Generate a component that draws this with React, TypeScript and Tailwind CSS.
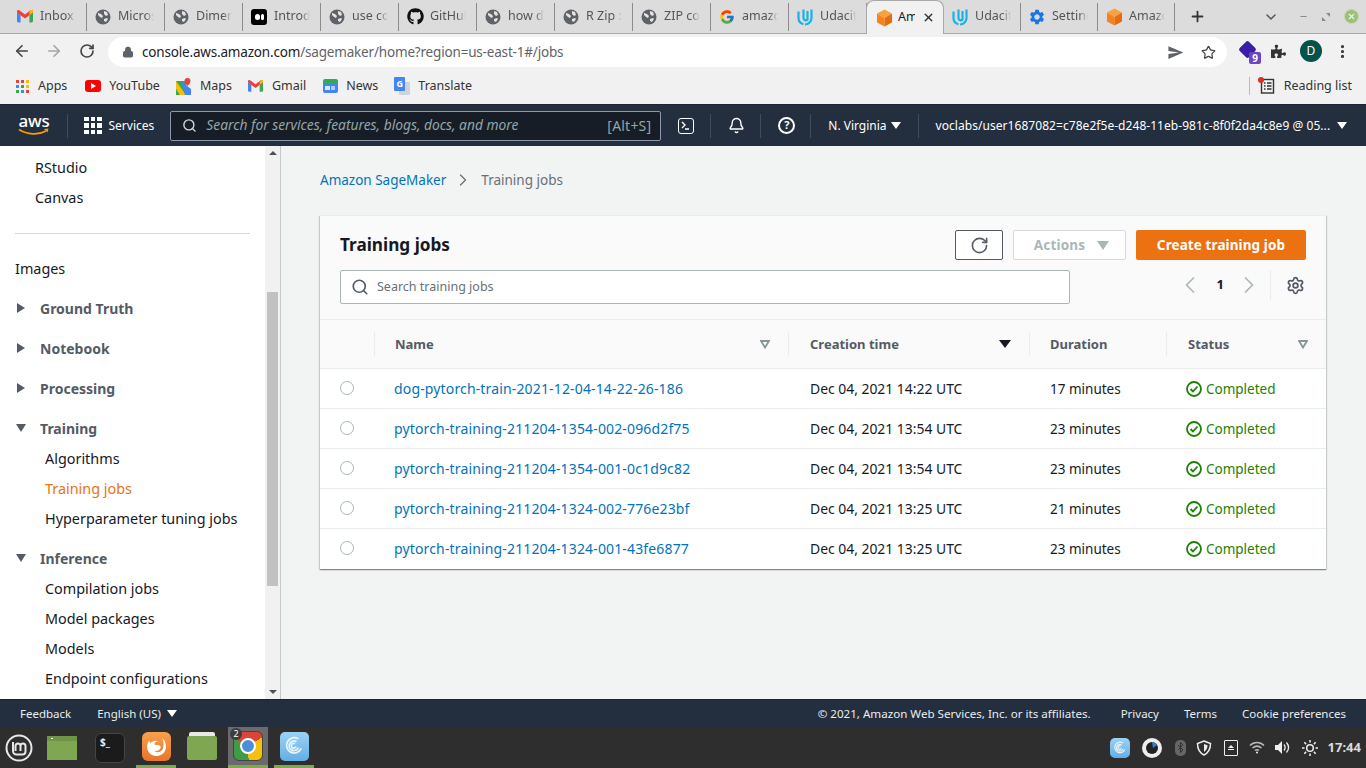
import { ArrowLeft, ArrowRight, RotateCw, Lock, Star, MoreVertical, Search, ChevronLeft, ChevronRight, Settings, Bell, Plus, X, ChevronDown, Minus } from "lucide-react";
import { FaGithub, FaPuzzlePiece } from "react-icons/fa";
import { FcGoogle } from "react-icons/fc";
import { MdSettings, MdSend } from "react-icons/md";

const Gmail = ({ s = 16 }: { s?: number }) => (
  <svg width={s} height={s * 0.78} viewBox="0 0 18 14">
    <path d="M0 2v10.500A1.500 1.500 0 0 0 1.500 14H4V6z" fill="#4285f4" />
    <path d="M18 2v10.500A1.500 1.500 0 0 1 16.500 14H14V6z" fill="#34a853" />
    <path d="M0 2.500 L4 6 L9 9.500 L14 6 L18 2.500 V1.500 C18 0 16.300 -.5 15 .5 L9 5 L3 .5 C1.700 -.5 0 0 0 1.500z" fill="#ea4335" />
    <path d="M14 2.200 L15 .5 C16.300 -.5 18 0 18 1.500V2.500L14 6z" fill="#fbbc04" />
  </svg>
);
const Globe = () => (
  <svg width="16" height="16" viewBox="0 0 16 16">
    <circle cx="8" cy="8" r="7.500" fill="#5f6368" />
    <path d="M3 4l3 1 2 2-1 2-2-1-2-2zM9 2l3 1 1 3-2 1-2-2zM9 10l3-1 1 1-2 3-2-1z" fill="#e4e4e4" />
  </svg>
);
const Medium = () => (
  <div className="w-4 h-4 rounded-[3px] bg-black flex items-center justify-center gap-[1px]">
    <div className="w-[5px] h-[6px] rounded-full bg-white" />
    <div className="w-[3px] h-[6px] rounded-full bg-white" />
  </div>
);
const Udacity = () => (
  <svg width="18" height="18" viewBox="0 0 18 18" fill="none" stroke="#16b4e4" strokeWidth="2.200">
    <path d="M2.500 3.500V10a6.500 6.500 0 0 0 5 6.200" />
    <path d="M15.500 1.500V10a6.500 6.500 0 0 1-6.500 6.500" />
    <path d="M7.500 1.500V10c0 2 2.500 3.200 4 1.500V3" />
  </svg>
);
const Cube = () => (
  <svg width="17" height="18" viewBox="0 0 17 18">
    <path d="M8.500 0.500 16 4.500 8.500 9 1 4.500z" fill="#f9a03f" />
    <path d="M1 4.500 8.500 9v8.500L1 13.500z" fill="#f58220" />
    <path d="M16 4.500 8.500 9v8.500l7.500-4z" fill="#e66c12" />
  </svg>
);

const tabs = [
  { t: "Inbox (", i: <Gmail /> },
  { t: "Micros", i: <Globe /> },
  { t: "Dimen", i: <Globe /> },
  { t: "Introd", i: <Medium /> },
  { t: "use co", i: <Globe /> },
  { t: "GitHub", i: <FaGithub size={17} color="#111" /> },
  { t: "how d", i: <Globe /> },
  { t: "R Zip ::", i: <Globe /> },
  { t: "ZIP co", i: <Globe /> },
  { t: "amazo", i: <FcGoogle size={16} /> },
  { t: "Udacit", i: <Udacity /> },
];
const tabsAfter = [
  { t: "Udacit", i: <Udacity /> },
  { t: "Setting", i: <MdSettings size={18} color="#1a73e8" /> },
  { t: "Amazo", i: <Cube /> },
];

const Tab = ({ t, i, w }: { t: string; i: React.ReactNode; w: string }) => (
  <div className={`${w} h-[28px] flex items-center pl-[7px] pr-2 border-r border-[#8b8b8b] shrink-0`}>
    <div className="w-[18px] flex justify-center shrink-0">{i}</div>
    <div className="ml-[6px] w-[36px] overflow-hidden whitespace-nowrap text-[12.500px] text-[#555] [mask-image:linear-gradient(to_right,black_75%,transparent)]">{t}</div>
  </div>
);

const TabStrip = () => (
  <div className="h-[34px] bg-[#dcdcdc] border-b border-[#a8a8a8] flex items-end pl-[9px] relative shrink-0">
    <div className="flex h-[33px] items-center">
      {tabs.map((x) => (
        <Tab key={x.t} t={x.t} i={x.i} w="w-[78px]" />
      ))}
      <div className="-ml-[1px] w-[78px] h-[34px] mt-[1px] bg-[#f1f1f1] rounded-t-lg flex items-center pl-2 pr-2 border border-b-0 border-[#a8a8a8] shrink-0">
        <div className="w-[18px] flex justify-center"><Cube /></div>
        <div className="ml-[5px] text-[12.500px] text-[#202124] w-[17px] overflow-hidden whitespace-nowrap">Amazon</div>
        <X size={13} strokeWidth={2.500} className="ml-auto text-[#333]" />
      </div>
      {tabsAfter.map((x) => (
        <Tab key={x.t} t={x.t} i={x.i} w="w-[77px]" />
      ))}
      <Plus size={17} strokeWidth={2.500} className="ml-[14px] text-[#333]" />
    </div>
    <div className="ml-auto h-[33px] flex items-center pr-[7px] text-[#555]">
      <ChevronDown size={16} strokeWidth={2.200} />
      <Minus size={9} strokeWidth={3} className="ml-[20px] text-[#888]" />
      <svg className="ml-[14px]" width="8" height="8" viewBox="0 0 8 8" fill="#888"><path d="M4 0h4v4zM0 4l4 4H0z" /></svg>
      <div className="ml-[14px] w-[15px] h-[15px] rounded-full bg-[#9bc07a] border border-[#c5d9b0] flex items-center justify-center">
        <X size={9} strokeWidth={3} className="text-[#eef5e6]" />
      </div>
    </div>
  </div>
);

const Toolbar = () => (
  <div className="h-[34px] bg-[#f1f1f1] flex items-center shrink-0">
    <ArrowLeft size={18} strokeWidth={2.200} className="ml-[13px] text-[#444]" />
    <ArrowRight size={18} strokeWidth={2.200} className="ml-[14px] text-[#a5a5a5]" />
    <RotateCw size={16} strokeWidth={2.500} className="ml-[16px] text-[#444]" />
    <div className="ml-[13px] w-[1119px] h-[30px] mt-[2px] rounded-full bg-white flex items-center pl-[14px] pr-[11px]">
      <Lock size={12} fill="#5f6368" className="text-[#5f6368]" />
      <span className="ml-[8px] text-[13.500px] text-[#202124] tracking-[-0.18px]">console.aws.amazon.com<span className="text-[#5f6368]">/sagemaker/home?region=us-east-1#/jobs</span></span>
      <MdSend size={17} className="ml-auto text-[#5f6368]" />
      <Star size={15} strokeWidth={2} className="ml-[17px] text-[#444]" />
    </div>
    <div className="ml-[12px] relative w-[20px] h-[20px]">
      <div className="absolute left-[2px] top-[2px] w-[13px] h-[13px] rotate-45 bg-[#3b1ea8] rounded-[2px]" />
      <div className="absolute left-[10px] top-[11px] w-[12px] h-[12px] bg-[#6a45c4] rounded-[2px] text-white text-[10px] leading-[12px] text-center font-bold">9</div>
    </div>
    <FaPuzzlePiece size={15} className="ml-[12px] text-[#333]" />
    <div className="ml-[14px] w-[22px] h-[22px] rounded-full bg-[#04534a] text-white text-[12px] flex items-center justify-center">D</div>
    <MoreVertical size={17} strokeWidth={2.500} className="ml-[12px] text-[#333]" />
  </div>
);

const Bm = ({ icon, label, ml }: { icon: React.ReactNode; label: string; ml: string }) => (
  <div className={`flex items-center ${ml}`}>
    <div className="w-[16px] flex justify-center">{icon}</div>
    <span className="ml-[8px] text-[12.500px] text-[#333]">{label}</span>
  </div>
);

const AppsIcon = () => (
  <div className="grid grid-cols-3 gap-[2px]">
    {["#ea4335", "#ea4335", "#fbbc04", "#4285f4", "#34a853", "#fbbc04", "#34a853", "#4285f4", "#ea4335"].map((c, k) => (
      <div key={k} className="w-[3px] h-[3px]" style={{ background: c }} />
    ))}
  </div>
);

const Bookmarks = () => (
  <div className="h-[36px] bg-[#f1f1f1] flex items-center shrink-0">
    <Bm ml="ml-[14px]" label="Apps" icon={<AppsIcon />} />
    <Bm ml="ml-[18px]" label="YouTube" icon={
      <div className="w-[16px] h-[12px] bg-[#f00] rounded-[3px] flex items-center justify-center">
        <div className="w-0 h-0 border-y-[3px] border-y-transparent border-l-[5px] border-l-white" />
      </div>} />
    <Bm ml="ml-[16px]" label="Maps" icon={
      <svg width="15" height="17" viewBox="0 0 15 17">
        <path d="M0 3h10v14H0z" fill="#34a853" />
        <path d="M0 3l10 14H4L0 11z" fill="#fbbc04" />
        <path d="M5 3l10 8v6H9z" fill="#4285f4" />
        <path d="M11.500 0a3 3 0 0 1 3 3c0 2-3 5-3 5s-3-3-3-5a3 3 0 0 1 3-3z" fill="#ea4335" />
      </svg>} />
    <Bm ml="ml-[16px]" label="Gmail" icon={<Gmail s={15} />} />
    <Bm ml="ml-[16px]" label="News" icon={
      <div className="w-[15px] h-[14px] rounded-[2px] bg-[#4285f4] border-t-[4px] border-t-[#34a853] flex items-center justify-center gap-[1px]">
        <div className="w-[5px] h-[4px] bg-white/80" />
        <div className="w-[4px] h-[4px] bg-white/60" />
      </div>} />
    <Bm ml="ml-[16px]" label="Translate" icon={
      <div className="relative w-[16px] h-[18px]">
        <div className="absolute left-[5px] top-[5px] w-[11px] h-[13px] bg-[#cfd3da] rounded-[1px]" />
        <div className="absolute left-0 top-0 w-[11px] h-[14px] bg-[#4285f4] rounded-[1px] text-white text-[9px] font-bold leading-[14px] text-center">G</div>
      </div>} />
    <div className="ml-auto w-[1px] h-[18px] bg-[#bbb]" />
    <div className="ml-[9px] relative">
      <svg width="16" height="16" viewBox="0 0 16 16" fill="none" stroke="#333" strokeWidth="1.400">
        <rect x="2.500" y="1.500" width="12" height="13.500" />
        <path d="M5 5h1.500M8 5h4.500M5 8h1.500M8 8h4.500M5 11h1.500M8 11h4.500" />
      </svg>
      <div className="absolute -left-[1px] -top-[1px] w-[6px] h-[6px] rounded-full bg-[#d93025]" />
    </div>
    <span className="ml-[9px] mr-[14px] text-[12.500px] text-[#333]">Reading list</span>
  </div>
);

const Caret = ({ c = "border-t-white", w = "border-x-[5px]", h = "border-t-[7px]" }: { c?: string; w?: string; h?: string }) => (
  <div className={`w-0 h-0 ${w} border-x-transparent ${h} ${c}`} />
);

const Sep = ({ ml }: { ml: string }) => <div className={`${ml} w-[1px] h-[24px] bg-[#414d5c]`} />;

const AwsNav = () => (
  <div className="h-[42px] bg-[#232f3e] flex items-center text-white shrink-0 border-t border-[#1b2531]">
    <div className="ml-[18px] w-[32px] flex flex-col items-center">
      <span className="text-[17px] leading-[15px] font-medium tracking-[-0.3px] -mt-[2px]">aws</span>
      <svg width="32" height="8" viewBox="0 0 32 8" fill="none">
        <path d="M1 1.500c8 5 19 6 27 1.500" stroke="#f90" strokeWidth="1.800" />
        <path d="M26 1l4.500-.5-1 4z" fill="#f90" />
      </svg>
    </div>
    <Sep ml="ml-[17px]" />
    <div className="ml-[16px] grid grid-cols-3 gap-[2px]">
      {[0, 1, 2, 3, 4, 5, 6, 7, 8].map((k) => (
        <div key={k} className="w-[4.500px] h-[4.500px] bg-white" />
      ))}
    </div>
    <span className="ml-[7px] text-[12px]">Services</span>
    <div className="ml-[16px] w-[491px] h-[30px] bg-[#161d26] border border-[#8d99a8] rounded-[2px] flex items-center pl-[11px] pr-[9px]">
      <Search size={15} strokeWidth={2.200} className="text-[#d5dbdb]" />
      <span className="ml-[9px] text-[13.800px] italic text-[#95a5a6]">Search for services, features, blogs, docs, and more</span>
      <span className="ml-auto text-[14px] tracking-[0.2px] text-[#95a5a6]">[Alt+S]</span>
    </div>
    <div className="ml-[17px] w-[16px] h-[16px] border-[1.500px] border-white rounded-[3px] flex items-center pl-[2px]">
      <svg width="9" height="9" viewBox="0 0 9 9" fill="none" stroke="white" strokeWidth="1.400"><path d="M1 1l3 3-3 3M4 8h4" /></svg>
    </div>
    <Sep ml="ml-[16px]" />
    <Bell size={17} strokeWidth={2} className="ml-[17px]" />
    <Sep ml="ml-[15px]" />
    <div className="ml-[17px] w-[17px] h-[17px] rounded-full border-2 border-white flex items-center justify-center text-[11px] font-bold">?</div>
    <Sep ml="ml-[15px]" />
    <span className="ml-[17px] text-[12px]">N. Virginia</span>
    <div className="ml-[4px]"><Caret /></div>
    <Sep ml="ml-[17px]" />
    <span className="ml-[17px] text-[12px] tracking-[0.05px] whitespace-nowrap">voclabs/user1687082=c78e2f5e-d248-11eb-981c-8f0f2da4c8e9 @ 05...</span>
    <div className="ml-[7px]"><Caret /></div>
  </div>
);

const SideLink = ({ t, active }: { t: string; active?: boolean }) => (
  <div className={`h-[30px] leading-[30px] pl-[45px] whitespace-nowrap ${active ? "text-[#ec7211]" : "text-[#16191f]"}`}>{t}</div>
);
const SideSection = ({ t, open }: { t: string; open?: boolean }) => (
  <div className="h-[30px] mt-[10px] pb-[2px] flex items-center pl-[16px] font-bold text-[14px] text-[#545b64]">
    {open ? (
      <>
        <Caret c="border-t-[#545b64]" w="border-x-[5px]" h="border-t-[8px]" />
        <span className="ml-[14px]">{t}</span>
      </>
    ) : (
      <>
        <div className="w-0 h-0 border-y-[5px] border-y-transparent border-l-[8px] border-l-[#545b64] ml-[1px] mr-[2px]" />
        <span className="ml-[13px]">{t}</span>
      </>
    )}
  </div>
);

const Sidebar = () => (
  <div className="w-[281px] shrink-0 bg-white flex border-r border-[#c4c8c8]">
    <div className="w-[265px] overflow-hidden pt-[7px] text-[14.400px]">
      <div className="h-[30px] leading-[30px] pl-[35px] text-[#16191f]">RStudio</div>
      <div className="h-[30px] leading-[30px] pl-[35px] text-[#16191f]">Canvas</div>
      <div className="mx-[15px] mt-[20px] border-t border-[#d5dbdb]" />
      <div className="h-[30px] leading-[30px] mt-[20px] pl-[15px] text-[#16191f]">Images</div>
      <SideSection t="Ground Truth" />
      <SideSection t="Notebook" />
      <SideSection t="Processing" />
      <SideSection t="Training" open />
      <SideLink t="Algorithms" />
      <SideLink t="Training jobs" active />
      <SideLink t="Hyperparameter tuning jobs" />
      <SideSection t="Inference" open />
      <SideLink t="Compilation jobs" />
      <SideLink t="Model packages" />
      <SideLink t="Models" />
      <SideLink t="Endpoint configurations" />
    </div>
    <div className="flex-1 bg-[#f1f1f1] flex flex-col items-center">
      <div className="mt-[5px] w-0 h-0 border-x-[4px] border-x-transparent border-b-[4px] border-b-[#505050]" />
      <div className="mt-[137px] w-[11px] h-[294px] bg-[#c1c1c1]" />
      <div className="mt-auto mb-[5px] w-0 h-0 border-x-[4px] border-x-transparent border-t-[4px] border-t-[#505050]" />
    </div>
  </div>
);

const rows = [
  ["dog-pytorch-train-2021-12-04-14-22-26-186", "Dec 04, 2021 14:22 UTC", "17 minutes"],
  ["pytorch-training-211204-1354-002-096d2f75", "Dec 04, 2021 13:54 UTC", "23 minutes"],
  ["pytorch-training-211204-1354-001-0c1d9c82", "Dec 04, 2021 13:54 UTC", "23 minutes"],
  ["pytorch-training-211204-1324-002-776e23bf", "Dec 04, 2021 13:25 UTC", "21 minutes"],
  ["pytorch-training-211204-1324-001-43fe6877", "Dec 04, 2021 13:25 UTC", "23 minutes"],
];

const gridCols = "grid grid-cols-[54px_414px_241px_137px_1fr]";

const SortIcon = () => (
  <svg width="10" height="9" viewBox="0 0 10 9" fill="none" stroke="#879596" strokeWidth="1.800"><path d="M1 1h8L5 7.500z" /></svg>
);

const HeadCell = ({ t, right, pl = "pl-[20px]" }: { t: string; right?: React.ReactNode; pl?: string }) => (
  <div className="flex items-center h-[48px]">
    <div className={`flex-1 h-[24px] border-l border-[#eaeded] flex items-center ${pl} pr-[18px]`}>
      <span className="font-bold text-[13px] pt-[2px] text-[#545b64]">{t}</span>
      <div className="ml-auto">{right}</div>
    </div>
  </div>
);

const Card = () => (
  <div className="mt-[26px] w-[1006px] bg-white shadow-[0_1px_1px_0_rgba(0,28,36,0.3),1px_1px_1px_0_rgba(0,28,36,0.15),-1px_1px_1px_0_rgba(0,28,36,0.15)] border-t border-[#eaeded]">
    <div className="bg-[#fafafa] h-[104px] px-[20px] border-b border-[#eaeded]">
      <div className="flex items-center pt-[14px]">
        <h1 className="text-[17.200px] font-bold text-[#16191f]">Training jobs</h1>
        <div className="ml-auto w-[48px] h-[30px] bg-white border border-[#545b64] rounded-[2px] flex items-center justify-center">
          <RotateCw size={19} strokeWidth={2} className="text-[#545b64]" />
        </div>
        <div className="ml-[10px] w-[113px] h-[30px] pl-[4px] bg-white border border-[#d5dbdb] rounded-[2px] flex items-center justify-center">
          <span className="text-[13.500px] font-bold text-[#aab7b8] tracking-[0.2px]">Actions</span>
          <div className="ml-[12px]"><Caret c="border-t-[#aab7b8]" w="border-x-[6px]" h="border-t-[9px]" /></div>
        </div>
        <div className="ml-[10px] w-[170px] h-[30px] bg-[#ec7211] rounded-[2px] flex items-center justify-center text-white text-[13.500px] font-bold tracking-[0.1px]">Create training job</div>
      </div>
      <div className="flex items-center mt-[10px]">
        <div className="w-[730px] h-[34px] bg-white border border-[#aab7b8] rounded-[2px] flex items-center pl-[10px]">
          <Search size={18} strokeWidth={2.200} className="text-[#545b64]" />
          <span className="ml-[8px] text-[12.500px] text-[#687078]">Search training jobs</span>
        </div>
        <div className="ml-auto flex items-center -mt-[4px]">
          <ChevronLeft size={28} strokeWidth={1.500} className="text-[#aab7b8]" />
          <span className="ml-[13px] text-[13px] font-bold text-[#16191f]">1</span>
          <ChevronRight size={28} strokeWidth={1.500} className="ml-[11px] text-[#aab7b8]" />
          <div className="ml-[7px] w-[1px] h-[30px] bg-[#eaeded]" />
          <Settings size={19} strokeWidth={2.200} className="ml-[15px] text-[#545b64]" />
          <div className="w-[1px]" />
        </div>
      </div>
    </div>
    <div className={`${gridCols} bg-[#fafafa] border-b border-[#eaeded] h-[49px]`}>
      <div />
      <HeadCell t="Name" right={<SortIcon />} />
      <HeadCell t="Creation time" pl="pl-[21px]" right={<Caret c="border-t-[#16191f]" w="border-x-[6px]" h="border-t-[8px]" />} />
      <HeadCell t="Duration" />
      <HeadCell t="Status" pl="pl-[21px]" right={<SortIcon />} />
    </div>
    {rows.map((r, k) => (
      <div key={r[0]} className={`${gridCols} h-[40px] items-center border-b ${k < rows.length - 1 ? "border-[#eaeded]" : "border-transparent"}`}>
        <div className="pl-[20px] -mt-[2px]"><div className="w-[14px] h-[14px] rounded-full border border-[#aab7b8] bg-white" /></div>
        <a className="pl-[20px] text-[14px] leading-[20px] text-[#0073bb] tracking-[0.15px] whitespace-nowrap">{r[0]}</a>
        <span className="pl-[22px] text-[13.900px] leading-[20px] text-[#16191f]">{r[1]}</span>
        <span className="pl-[21px] text-[13.500px] leading-[20px] text-[#16191f]">{r[2]}</span>
        <div className="pl-[20px] flex items-center text-[13.500px] leading-[20px] text-[#1d8102]">
          <svg width="16" height="16" viewBox="0 0 16 16" fill="none" stroke="#1d8102" strokeWidth="1.800">
            <circle cx="8" cy="8" r="7" />
            <path d="M4.500 8l2.500 2.500 4.500-5" />
          </svg>
          <span className="ml-[4px]">Completed</span>
        </div>
      </div>
    ))}
  </div>
);

const Main = () => (
  <div className="flex-1 bg-[#f2f3f3] pl-[39px] pt-[25px] overflow-hidden">
    <div className="flex items-center text-[13.500px] h-[18px]">
      <span className="text-[#0073bb]">Amazon SageMaker</span>
      <ChevronRight size={20} strokeWidth={1.500} className="ml-[7px] text-[#687078]" />
      <span className="ml-[8px] text-[#687078]">Training jobs</span>
    </div>
    <Card />
  </div>
);

const Footer = () => (
  <div className="h-[28px] bg-[#232f3e] flex items-center text-[11.500px] text-[#eaeded] shrink-0 border-t border-[#1b2531]">
    <span className="ml-[20px]">Feedback</span>
    <span className="ml-[26px]">English (US)</span>
    <div className="ml-[6px]"><Caret /></div>
    <span className="ml-auto text-[11.600px]">© 2021, Amazon Web Services, Inc. or its affiliates.</span>
    <span className="ml-[30px]">Privacy</span>
    <span className="ml-[25px]">Terms</span>
    <span className="ml-[25px] mr-[20px]">Cookie preferences</span>
  </div>
);

const FolderGreen = () => (
  <div className="w-[30px] h-[24px] bg-[#7fa650] relative">
    <div className="absolute left-0 top-0 w-full h-[5px] bg-[#6f9447]" />
    <div className="absolute left-[4px] top-[2px] w-[2px] h-[1px] bg-white" />
  </div>
);

const EyeApp = () => (
  <svg width="20" height="20" viewBox="0 0 20 20">
    <circle cx="10" cy="10" r="10" fill="#eee" />
    <circle cx="10" cy="10" r="6" fill="#222" />
    <path d="M10 4a6 6 0 0 1 5 3l-4 3z" fill="#3584c8" />
  </svg>
);

const BlueApp = ({ s }: { s: number }) => (
  <div style={{ width: s, height: s }} className="rounded-[5px] bg-gradient-to-b from-[#9bd2f5] to-[#62aee6] flex items-center justify-center">
    <svg width={s * 0.66} height={s * 0.66} viewBox="0 0 20 20" fill="none" stroke="#e8f4fc" strokeWidth="1.800">
      <path d="M18 13a8 8 0 1 1-3-10" />
      <path d="M15 12a5 5 0 1 1-2-6" />
      <path d="M12.500 11a2.500 2.500 0 1 1-1-3" />
    </svg>
  </div>
);

const Taskbar = () => (
  <div className="h-[41px] bg-[#2e2e2e] flex items-center shrink-0">
    <svg className="ml-[5px]" width="28" height="28" viewBox="0 0 28 28" fill="none" stroke="#e8e8e8" strokeWidth="2">
      <circle cx="14" cy="14" r="12.500" />
      <path d="M8 8v9a3.500 3.500 0 0 0 3.500 3.500h6a3 3 0 0 0 3-3V12a2.500 2.500 0 0 0-5 0v5M15.500 12a2.500 2.500 0 0 0-5 0v5" />
    </svg>
    <div className="ml-[14px]"><FolderGreen /></div>
    <div className="ml-[18px] w-[30px] h-[30px] bg-[#1b1b1b] border border-[#444] rounded-[6px] text-[#eee] text-[10px] leading-[10px] pl-[4px] pt-[3px] font-bold">$_</div>
    <div className="ml-[11px] h-full w-[40px] relative flex items-center justify-center border-b-[3px] border-[#7fa650]">
      <div className="w-[29px] h-[29px] rounded-[6px] bg-gradient-to-b from-[#f8a04c] to-[#e9742b] flex items-center justify-center">
        <svg width="21" height="21" viewBox="0 0 20 20">
          <path d="M15 2c3 2 4 5 4 8a9 9 0 1 1-16-5.500L4 7c2-2.500 5-3 8-2-2 0-4 1-4 3 2 1 5 0 6 2 0 3-3 5-6 4 3 3 8 1 8.500-3.500C17 7 16.500 4 15 2z" fill="white" />
        </svg>
      </div>
    </div>
    <div className="ml-[11px] w-[30px] h-[24px] bg-[#7fa650] rounded-[2px] relative">
      <div className="absolute -top-[4px] left-[2px] w-[26px] h-[4px] bg-[#e8e8e8] rounded-t-[2px]" />
    </div>
    <div className="ml-[11px] w-[40px] h-full bg-[#6b6b6b] border-b-[3px] border-[#7fa650] relative flex items-center justify-center">
      <div className="w-[30px] h-[30px] rounded-[6px] bg-[conic-gradient(from_-60deg,#db4437_0_33%,#f4c20d_33%_66%,#3f9b45_66%)] flex items-center justify-center border border-[#444]">
        <div className="w-[16px] h-[16px] rounded-full bg-[#4a8fd8] border-2 border-white" />
      </div>
      <div className="absolute left-[2px] top-[1px] w-[12px] h-[12px] rounded-full bg-[#3c3c3c] text-white text-[9px] leading-[12px] text-center">2</div>
    </div>
    <div className="ml-[6px] w-[40px] h-full border-b-[3px] border-[#7fa650] flex items-center justify-center">
      <BlueApp s={29} />
    </div>
    <div className="ml-auto flex items-center pr-[5px]">
      <BlueApp s={20} />
      <div className="ml-[12px]"><EyeApp /></div>
      <div className="ml-[13px] w-[11px] h-[16px] rounded-[5px] bg-[#666] flex items-center justify-center">
        <svg width="7" height="11" viewBox="0 0 7 11" fill="none" stroke="#333" strokeWidth="1"><path d="M1 3l5 5-2.500 2.500v-10L6 3 1 8" /></svg>
      </div>
      <svg className="ml-[10px]" width="16" height="16" viewBox="0 0 16 16" fill="none" stroke="#eee" strokeWidth="1.500"><path d="M8 1l6.500 2.500C14.500 9 12 13 8 15 4 13 1.500 9 1.500 3.500z" /><path d="M8 4l3.500 1.300C11.500 8.500 10 10.500 8 12z" fill="#eee" stroke="none" /></svg>
      <div className="ml-[12px] w-[14px] h-[16px] border-[1.500px] border-[#eee] rounded-[1px] flex flex-col items-center justify-center gap-[1px]">
        <div className="w-0 h-0 border-x-[3px] border-x-transparent border-b-[3px] border-b-[#eee]" />
        <div className="w-[6px] h-[1.500px] bg-[#eee]" />
      </div>
      <svg className="ml-[11px]" width="16" height="13" viewBox="0 0 16 13" fill="none" stroke="#bbb" strokeWidth="1.500"><path d="M1 4.500c4-4 10-4 14 0M3.500 7c3-2.500 6-2.500 9 0M6 9.500c1.500-1 2.500-1 4 0" /><circle cx="8" cy="11.500" r="1" fill="#eee" stroke="none" /></svg>
      <svg className="ml-[10px]" width="15" height="13" viewBox="0 0 15 13"><path d="M0 4h3l4-4v13l-4-4H0z" fill="#eee" /><path d="M9 3.500c1.500 2 1.500 4 0 6M11.500 1.500c2.500 3 2.500 7 0 10" stroke="#eee" strokeWidth="1.300" fill="none" /></svg>
      <svg className="ml-[12px]" width="16" height="16" viewBox="0 0 16 16" fill="none" stroke="#eee" strokeWidth="1.500"><circle cx="8" cy="8" r="3.300" /><path d="M8 0v2.500M8 13.500V16M0 8h2.500M13.500 8H16M2.300 2.300l1.800 1.800M11.900 11.900l1.800 1.800M2.300 13.700l1.800-1.800M11.900 4.100l1.800-1.800" /></svg>
      <span className="ml-[10px] text-[13px] font-bold text-[#dadada]">17:44</span>
    </div>
  </div>
);

export default function App() {
  return (
    <div className="w-[1366px] h-[768px] overflow-hidden flex flex-col font-['Noto_Sans',sans-serif]">
      <TabStrip />
      <Toolbar />
      <Bookmarks />
      <AwsNav />
      <div className="flex-1 flex min-h-0">
        <Sidebar />
        <Main />
      </div>
      <Footer />
      <Taskbar />
    </div>
  );
}
